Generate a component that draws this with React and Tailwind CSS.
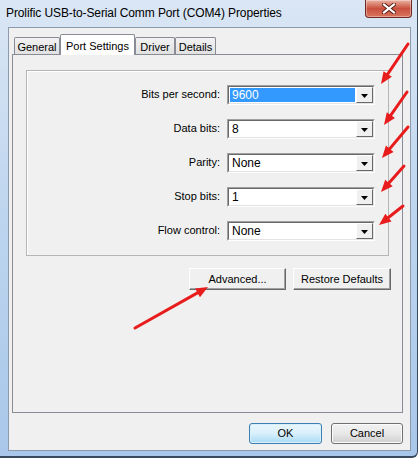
import React from 'react';

const tabs = [
  { label: 'General', w: 'w-[46px]' },
  { label: 'Port Settings', w: 'w-[75px]', active: true },
  { label: 'Driver', w: 'w-[40px]' },
  { label: 'Details', w: 'w-[41px]' },
];

const fields = [
  { label: 'Bits per second:', value: '9600', selected: true },
  { label: 'Data bits:', value: '8' },
  { label: 'Parity:', value: 'None' },
  { label: 'Stop bits:', value: '1' },
  { label: 'Flow control:', value: 'None' },
];

const arrows = [
  [408, 44, 381, 84],
  [407, 92, 384, 125],
  [408, 127, 382, 158],
  [404, 166, 381, 192],
  [403, 206, 379, 225],
  [135, 328, 208, 287],
];

const arrowHead = ([x1, y1, x2, y2]) => {
  const dx = x2 - x1;
  const dy = y2 - y1;
  const len = Math.hypot(dx, dy);
  const ux = dx / len;
  const uy = dy / len;
  const bx = x2 - ux * 12;
  const by = y2 - uy * 12;
  const px = -uy * 5;
  const py = ux * 5;
  return {
    line: [x1, y1, x2 - ux * 8, y2 - uy * 8],
    points: `${x2},${y2} ${bx + px},${by + py} ${bx - px},${by - py}`,
  };
};

const Combo = ({ value, selected }) => (
  <div className="w-[148px] h-[20px] border border-t-[#a0a0a0] border-l-[#a0a0a0] border-b-white border-r-white">
    <div className="h-full flex border border-t-[#696969] border-l-[#696969] border-b-[#e3e3e3] border-r-[#e3e3e3] bg-white">
      <div className="flex-1 p-px">
        <div
          className={`h-full flex items-center pl-[2px] text-[12px] leading-none ${
            selected ? 'bg-[#3399ff] text-white' : 'text-black'
          }`}
        >
          {value}
        </div>
      </div>
      <div className="w-[17px] h-full flex items-center justify-center bg-[#f0f0f0] border border-t-white border-l-white border-b-[#696969] border-r-[#696969]">
        <svg width="7" height="4" viewBox="0 0 7 4" className="mt-px">
          <path d="M0 0h7L3.5 4z" fill="#000" />
        </svg>
      </div>
    </div>
  </div>
);

const ClassicButton = ({ children, w }) => (
  <div
    className={`${w} h-[22px] flex items-center justify-center bg-[#f0f0f0] border border-t-white border-l-white border-b-[#696969] border-r-[#696969] shadow-[inset_-1px_-1px_0_#a0a0a0] text-[11px] text-black`}
  >
    {children}
  </div>
);

export default function App() {
  return (
    <div className="relative w-[418px] h-[458px] overflow-hidden bg-gradient-to-b from-[#dae6f4] via-[#bcd4ee] to-[#a9c7ea] border-r border-b-2 border-[#3a4a5e] rounded-br-[6px] font-['Liberation_Sans',Arial,sans-serif]">
      {/* title bar */}
      <div className="h-[27px] flex items-start justify-between">
        <div className="pl-[6px] pt-[6px] text-[12px] leading-[14px] tracking-[-0.1px] text-black">
          Prolific USB-to-Serial Comm Port (COM4) Properties
        </div>
        <div className="mr-[5px] w-[47px] h-[18px] flex items-center justify-center rounded-b-[4px] border border-t-0 border-[#6e2a22] bg-gradient-to-b from-[#eab1a3] via-[#c8503e] to-[#d9745c] shadow-[inset_0_0_0_1px_rgba(255,255,255,0.35)]">
          <svg width="14" height="11" viewBox="0 0 14 11">
            <path d="M2 1.5l10 8M12 1.5l-10 8" stroke="#5a1c14" strokeWidth="4" strokeLinecap="square" />
            <path d="M2 1.5l10 8M12 1.5l-10 8" stroke="#fff" strokeWidth="2.2" strokeLinecap="square" />
          </svg>
        </div>
      </div>

      {/* client area */}
      <div className="ml-[8px] mr-[6px] h-[424px] bg-[#f0f0f0] border border-[#8d9aac] text-[11px] text-black">
        <div className="pt-[5px] pl-[5px] flex items-end h-[26px] relative z-10">
          {tabs.map((t) =>
            t.active ? (
              <div
                key={t.label}
                className={`${t.w} h-[21px] -mb-px flex items-start justify-center pt-[3px] bg-white border border-b-0 border-[#898c95] rounded-t-[2px]`}
              >
                {t.label}
              </div>
            ) : (
              <div
                key={t.label}
                className={`${t.w} h-[17px] flex items-center justify-center pt-[2px] bg-gradient-to-b from-[#f2f2f2] to-[#e1e1e1] border border-b-0 border-[#898c95] rounded-t-[2px]`}
              >
                {t.label}
              </div>
            )
          )}
        </div>

        <div className="ml-[3px] mr-[7px] h-[359px] border border-[#898c95] bg-[#f0f0f0] flex flex-col">
          <div className="mt-[15px] mx-[13px] h-[186px] border border-[#b5b5b5] shadow-[inset_1px_1px_0_#fff] flex flex-col gap-[14px] pt-[14px]">
            {fields.map((f) => (
              <div key={f.label} className="flex items-center h-[20px]">
                <div className="w-[194px] text-right pr-px -mt-[2px]">{f.label}</div>
                <div className="ml-[6px]">
                  <Combo value={f.value} selected={f.selected} />
                </div>
              </div>
            ))}
          </div>

          <div className="mt-[12px] flex justify-end gap-[7px] pr-[11px]">
            <ClassicButton w="w-[97px]">Advanced...</ClassicButton>
            <ClassicButton w="w-[98px]">Restore Defaults</ClassicButton>
          </div>
        </div>

        <div className="mt-[10px] flex justify-end gap-[9px] pr-[7px]">
          <div className="w-[73px] h-[21px] flex items-center justify-center rounded-[3px] border border-[#3c7fb1] bg-gradient-to-b from-[#eaf6fd] via-[#d9f0fc] to-[#a7d9f5] shadow-[inset_0_0_0_1px_#d8eefa]">
            OK
          </div>
          <div className="w-[72px] h-[21px] flex items-center justify-center rounded-[3px] border border-[#707070] bg-gradient-to-b from-[#f2f2f2] via-[#e8e8e8] to-[#cfcfcf] shadow-[inset_0_0_0_1px_#fbfbfb]">
            Cancel
          </div>
        </div>
      </div>

      {/* red annotation arrows */}
      <svg className="absolute inset-0 pointer-events-none" width="418" height="458">
        {arrows.map((a, i) => {
          const h = arrowHead(a);
          return (
            <g key={i}>
              <line
                x1={h.line[0]}
                y1={h.line[1]}
                x2={h.line[2]}
                y2={h.line[3]}
                stroke="#e81c1c"
                strokeWidth="3"
                strokeLinecap="round"
              />
              <polygon points={h.points} fill="#e81c1c" />
            </g>
          );
        })}
      </svg>
    </div>
  );
}
